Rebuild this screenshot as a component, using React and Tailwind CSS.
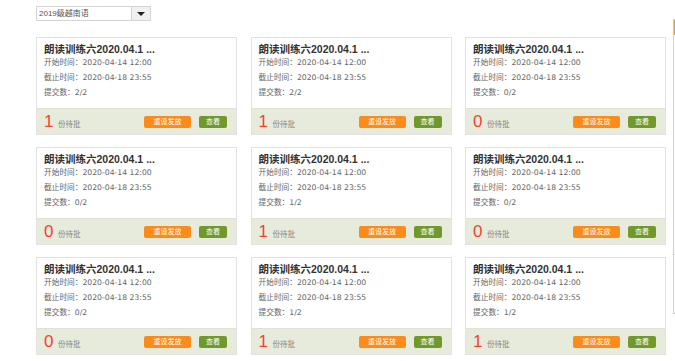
import React from 'react';

const cards = [
  { count: 1, submitted: '2/2' },
  { count: 1, submitted: '2/2' },
  { count: 0, submitted: '0/2' },
  { count: 0, submitted: '0/2' },
  { count: 1, submitted: '1/2' },
  { count: 0, submitted: '0/2' },
  { count: 0, submitted: '0/2' },
  { count: 1, submitted: '1/2' },
  { count: 1, submitted: '1/2' },
];

const font = { fontFamily: '"Liberation Sans", "Noto Sans CJK SC", sans-serif' };
const metaFont = { fontFamily: '"DejaVu Sans", "Noto Sans CJK SC", sans-serif' };

const TaskCard = ({ count, submitted }) => (
  <div className="w-[201px] border border-[#e2e2e2] bg-white flex flex-col">
    {/* Card body */}
    <div className="h-[70px] px-[7px] pt-[5px]">
      <p className="text-[10.5px] leading-[12px] font-bold text-[#333] whitespace-nowrap">
        朗读训练六2020.04.1 ...
      </p>
      <div style={metaFont} className="text-[7.7px] leading-[15px] text-[#666] whitespace-nowrap">
        <p>开始时间：2020-04-14 12:00</p>
        <p>截止时间：2020-04-18 23:55</p>
        <p>提交数：{submitted}</p>
      </div>
    </div>

    {/* Footer with pending count and actions */}
    <div className="h-[26px] bg-[#e7ebdc] border-t border-[#e0e3d4] flex items-center justify-between pl-[7px] pr-[9px]">
      <div className="flex items-baseline">
        <span className="text-[17px] leading-none text-[#f2432e] w-[14px]">{count}</span>
        <span className="text-[7.5px] text-[#888]">份待批</span>
      </div>
      <div className="flex items-center gap-[8px]">
        <button className="w-[47px] h-[12px] rounded-[2px] bg-[#fb8c1c] text-white text-[7px] leading-[12px]">
          重设发放
        </button>
        <button className="w-[28px] h-[12px] rounded-[2px] bg-[#6f9a2b] text-white text-[7px] leading-[12px]">
          查看
        </button>
      </div>
    </div>
  </div>
);

const App = () => {
  return (
    <div className="w-[675px] h-[361px] bg-white overflow-hidden flex" style={font}>
      {/* Main area */}
      <div className="w-[673px] shrink-0 pl-[36px] pt-[6px]">
        {/* Class selector */}
        <div className="w-[115px] h-[15px] border border-[#d4d4d4] flex">
          <div className="flex-1 px-[2px] text-[8px] leading-[13px] text-[#555]">2019级越南语</div>
          <div className="w-[19px] bg-[#f0f0f0] border-l border-[#d4d4d4] flex items-center justify-center">
            <div className="w-0 h-0 border-l-[4px] border-r-[4px] border-t-[4px] border-l-transparent border-r-transparent border-t-[#222]" />
          </div>
        </div>

        {/* Card grid */}
        <div className="mt-[16px] grid grid-cols-[201px_201px_201px] gap-x-[13.5px] gap-y-[12px]">
          {cards.map((c, i) => (
            <TaskCard key={i} count={c.count} submitted={c.submitted} />
          ))}
        </div>
      </div>

      {/* Side panel peeking in from the right */}
      <div className="w-[200px] shrink-0 mt-[19px] h-[295px] border border-[#cfcfcf] flex flex-col">
        <div className="h-[15px] bg-[#c9a24a]" />
        <div className="h-[220px] border-b border-[#dddddd]" />
      </div>
    </div>
  );
};

export default App;
